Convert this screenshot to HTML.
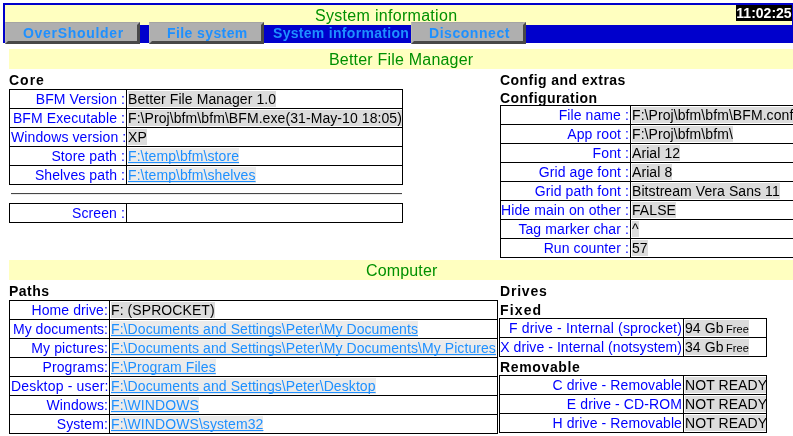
<!DOCTYPE html>
<html><head><meta charset="utf-8">
<style>
*{margin:0;padding:0;box-sizing:border-box}
html,body{width:793px;height:436px;overflow:hidden;background:#fff;will-change:transform;font-family:"Liberation Sans",sans-serif;position:relative}
.a{position:absolute;white-space:pre}
#hdr{position:absolute;left:3px;top:3px;width:791px;border-right:2px solid #0000cc;height:40px;border-left:2px solid #0000cc;border-top:2px solid #0000cc;background:#ffffc0}
#band{position:absolute;left:5px;top:25px;width:800px;height:18px;background:#0000cc}
.btn{position:absolute;top:22px;height:22px;background:#afafaf;border-top:3px solid #afafaf;border-left:3px solid #afafaf;border-right:3px solid #484848;border-bottom:3px solid #484848}
.btn::before{content:"";position:absolute;left:-3px;top:-2px;width:1px;height:18px;background:#bcbcac}
.btn::after{content:"";position:absolute;left:-2px;top:-3px;right:0;height:1px;background:#a4a4a4}
.bt{position:absolute;font:bold 14px/16px "Liberation Sans",sans-serif;color:#1e90ff;white-space:pre}
#clock{position:absolute;left:736px;top:5px;width:56px;height:16px;background:#000;color:#fff;font:bold 14px/16px "Liberation Sans",sans-serif;text-align:center}
.title{position:absolute;font:16px/18px "Liberation Sans",sans-serif;color:#009000;white-space:pre}
.bar{position:absolute;left:9px;width:784px;height:20px;background:#ffffc0}
.h{position:absolute;font:bold 14px/16px "Liberation Sans",sans-serif;color:#000;white-space:pre}
table{position:absolute;border-collapse:collapse;table-layout:fixed;font:14px/16px "Liberation Sans",sans-serif}
td{border:1px solid #000;padding:1px;height:19px;white-space:pre;overflow:hidden;vertical-align:top}
td.l{color:#0000ff;text-align:right;letter-spacing:0.1px}
td.v{letter-spacing:0.08px}
td.v span{background:#dcdcdc;color:#000}
td.v a{background:#ebebeb;color:#1e90ff;text-decoration:underline;text-decoration-skip-ink:none}
small{font-size:11px;line-height:11px;margin-left:2.5px}
hr{position:absolute;border:0;border-top:1px solid #464646;border-bottom:1px solid #ececec;height:2px}
</style></head><body>
<div id="hdr"></div>
<div id="band"></div>
<div class="title" style="left:315px;top:7px;letter-spacing:0.3px">System information</div>
<div id="clock">11:02:25</div>
<div class="btn" style="left:5px;width:135px"></div>
<div class="bt" style="left:23px;top:25px;letter-spacing:0.7px">OverShoulder</div>
<div class="btn" style="left:149px;width:115px"></div>
<div class="bt" style="left:167px;top:25px;letter-spacing:0.4px">File system</div>
<div class="bt" style="left:273px;top:25px;letter-spacing:0.3px">System information</div>
<div class="btn" style="left:411px;width:115px"></div>
<div class="bt" style="left:429px;top:25px;letter-spacing:0.55px">Disconnect</div>

<div class="bar" style="top:49px"></div>
<div class="title" style="left:329px;top:51px;letter-spacing:0.2px">Better File Manager</div>

<div class="h" style="left:9px;top:72px;letter-spacing:1px">Core</div>
<table style="left:9px;top:89px;width:394px">
<colgroup><col style="width:117px"><col></colgroup>
<tr><td class="l">BFM Version :</td><td class="v"><span>Better File Manager 1.0</span></td></tr>
<tr><td class="l">BFM Executable :</td><td class="v"><span>F:\Proj\bfm\bfm\BFM.exe(31-May-10 18:05)</span></td></tr>
<tr><td class="l">Windows version :</td><td class="v"><span>XP</span></td></tr>
<tr><td class="l">Store path :</td><td class="v"><a>F:\temp\bfm\store</a></td></tr>
<tr><td class="l">Shelves path :</td><td class="v"><a>F:\temp\bfm\shelves</a></td></tr>
</table>
<hr style="left:11px;top:193px;width:391px">
<table style="left:9px;top:203px;width:394px">
<colgroup><col style="width:117px"><col></colgroup>
<tr><td class="l">Screen :</td><td class="v"></td></tr>
</table>

<div class="h" style="left:500px;top:72px;letter-spacing:0.44px">Config and extras</div>
<div class="h" style="left:500px;top:90px;letter-spacing:0.44px">Configuration</div>
<table style="left:500px;top:105px;width:400px">
<colgroup><col style="width:130px"><col></colgroup>
<tr><td class="l">File name :</td><td class="v"><span>F:\Proj\bfm\bfm\BFM.conf</span></td></tr>
<tr><td class="l">App root :</td><td class="v"><span>F:\Proj\bfm\bfm\</span></td></tr>
<tr><td class="l">Font :</td><td class="v"><span>Arial 12</span></td></tr>
<tr><td class="l">Grid age font :</td><td class="v"><span>Arial 8</span></td></tr>
<tr><td class="l">Grid path font :</td><td class="v"><span>Bitstream Vera Sans 11</span></td></tr>
<tr><td class="l" style="letter-spacing:0.1px;padding-left:0">Hide main on other :</td><td class="v"><span>FALSE</span></td></tr>
<tr><td class="l">Tag marker char :</td><td class="v"><span>^</span></td></tr>
<tr><td class="l">Run counter :</td><td class="v"><span>57</span></td></tr>
</table>

<div class="bar" style="top:260px"></div>
<div class="title" style="left:366px;top:262px;letter-spacing:0.15px">Computer</div>

<div class="h" style="left:9px;top:283px;letter-spacing:0.5px">Paths</div>
<table style="left:9px;top:300px;width:489px">
<colgroup><col style="width:100px"><col></colgroup>
<tr><td class="l">Home drive:</td><td class="v"><span>F: (SPROCKET)</span></td></tr>
<tr><td class="l" style="letter-spacing:0">My documents:</td><td class="v"><a>F:\Documents and Settings\Peter\My Documents</a></td></tr>
<tr><td class="l">My pictures:</td><td class="v"><a>F:\Documents and Settings\Peter\My Documents\My Pictures</a></td></tr>
<tr><td class="l">Programs:</td><td class="v"><a>F:\Program Files</a></td></tr>
<tr><td class="l" style="letter-spacing:0.18px">Desktop - user:</td><td class="v"><a>F:\Documents and Settings\Peter\Desktop</a></td></tr>
<tr><td class="l">Windows:</td><td class="v"><a>F:\WINDOWS</a></td></tr>
<tr><td class="l">System:</td><td class="v"><a>F:\WINDOWS\system32</a></td></tr>
</table>

<div class="h" style="left:500px;top:283px;letter-spacing:0.8px">Drives</div>
<div class="h" style="left:500px;top:302px;letter-spacing:1.15px">Fixed</div>
<table style="left:499px;top:318px;width:268px">
<colgroup><col style="width:184px"><col></colgroup>
<tr><td class="l" style="letter-spacing:0.17px">F drive - Internal (sprocket)</td><td class="v"><span>94 Gb<small>Free</small></span></td></tr>
<tr><td class="l" style="letter-spacing:0.07px;padding-left:0">X drive - Internal (notsystem)</td><td class="v"><span>34 Gb<small>Free</small></span></td></tr>
</table>
<div class="h" style="left:500px;top:359px;letter-spacing:0.65px">Removable</div>
<table style="left:499px;top:375px;width:268px">
<colgroup><col style="width:184px"><col></colgroup>
<tr><td class="l">C drive - Removable</td><td class="v"><span>NOT READY</span></td></tr>
<tr><td class="l">E drive - CD-ROM</td><td class="v"><span>NOT READY</span></td></tr>
<tr><td class="l">H drive - Removable</td><td class="v"><span>NOT READY</span></td></tr>
</table>
</body></html>
